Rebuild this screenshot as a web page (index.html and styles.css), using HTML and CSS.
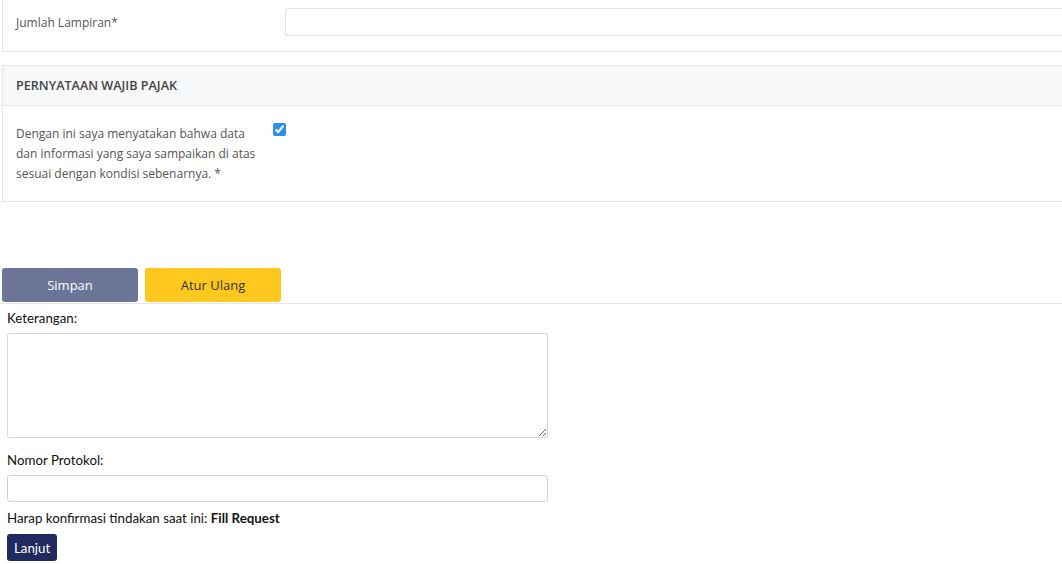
FILE: index.html
```html
<!DOCTYPE html>
<html lang="id">
<head>
    <meta charset="UTF-8">
    <title>Formulir Permohonan</title>
    <link rel="stylesheet" href="styles.css">
</head>
<body>
    <div class="form-area">
        <div class="card card-first">
            <div class="form-row">
                <label class="row-label">Jumlah Lampiran*</label>
                <input type="text" class="row-input">
            </div>
        </div>

        <div class="card">
            <div class="card-header">PERNYATAAN WAJIB PAJAK</div>
            <div class="card-body">
                <p class="statement">Dengan ini saya menyatakan bahwa data dan informasi yang saya sampaikan di atas sesuai dengan kondisi sebenarnya. *</p>
                <input type="checkbox" class="statement-check" checked>
            </div>
        </div>

        <div class="actions">
            <button class="btn btn-save">Simpan</button>
            <button class="btn btn-reset">Atur Ulang</button>
        </div>
    </div>

    <div class="workflow">
        <label class="wf-label">Keterangan:</label>
        <textarea class="wf-textarea"></textarea>

        <label class="wf-label wf-gap">Nomor Protokol:</label>
        <input type="text" class="wf-input">

        <p class="wf-confirm">Harap konfirmasi tindakan saat ini: <b>Fill Request</b></p>
        <button class="btn-next">Lanjut</button>
    </div>
</body>
</html>
```

FILE: styles.css
```css
body {
    margin: 0;
    background: #fff;
    overflow: hidden;
}

.form-area {
    font-family: "Open Sans", sans-serif;
    font-size: 12px;
    color: #555;
    padding-left: 2px;
}

.card {
    border: 1px solid #e4e6ea;
    border-right: 0;
    background: #fff;
    margin-bottom: 13px;
}

.card-first {
    border-top: 0;
}

.form-row {
    display: flex;
    align-items: center;
    padding: 8px 0 15px 13px;
}

.row-label {
    width: 269px;
    flex-shrink: 0;
}

.row-input {
    flex: 1;
    height: 28px;
    box-sizing: border-box;
    border: 1px solid #dfe1e5;
    border-right: 0;
    border-radius: 3px 0 0 3px;
    margin: 0;
}

.card-header {
    background: #f7f8fa;
    border-bottom: 1px solid #e4e6ea;
    height: 39px;
    line-height: 39px;
    padding-left: 13px;
    font-size: 12.6px;
    font-weight: 600;
    color: #444;
}

.card-body {
    display: flex;
    align-items: flex-start;
    padding: 18px 0 17px 13px;
}

.statement {
    width: 250px;
    margin: 0;
    line-height: 20px;
}

.statement-check {
    width: 13px;
    height: 13px;
    margin: -1px 0 0 7px;
    accent-color: #2b8ff0;
}

.actions {
    display: flex;
    gap: 7px;
    margin-top: 66px;
    border-bottom: 1px solid #e8e8e8;
    margin-left: -2px;
    padding-left: 2px;
    padding-bottom: 1px;
}

.btn {
    width: 136px;
    height: 34px;
    border: 0;
    border-radius: 3px;
    font-family: "Open Sans", sans-serif;
    font-size: 13px;
}

.btn-save {
    background: #6c7598;
    color: #fff;
}

.btn-reset {
    background: #ffc81e;
    color: #333;
}

.workflow {
    font-family: Lato, sans-serif;
    font-size: 13.3px;
    color: #111;
    padding: 4px 0 0 7px;
    display: flex;
    flex-direction: column;
    align-items: flex-start;
}

.wf-label {
    line-height: 20px;
    margin-bottom: 5px;
}

.wf-gap {
    margin-top: 12px;
}

.wf-textarea {
    width: 541px;
    height: 105px;
    box-sizing: border-box;
    border: 1px solid #d8d8d8;
    border-radius: 2px;
    margin: 0;
}

.wf-input {
    width: 541px;
    height: 27px;
    box-sizing: border-box;
    border: 1px solid #cfd3d8;
    border-radius: 3px;
    margin: 0;
}

.wf-confirm {
    margin: 6px 0 6px;
    line-height: 20px;
}

.btn-next {
    height: 27px;
    padding: 0 7px;
    border: 0;
    border-radius: 3px;
    background: #202a5e;
    color: #fff;
    font-family: Lato, sans-serif;
    font-size: 13.3px;
}
```
